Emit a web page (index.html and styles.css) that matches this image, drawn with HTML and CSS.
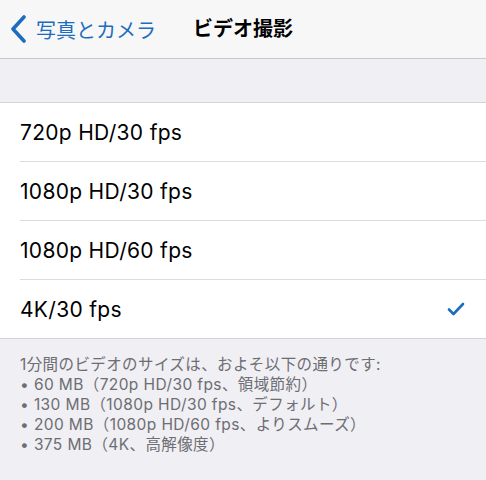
FILE: index.html
```html
<!DOCTYPE html>
<html lang="ja">
<head>
    <meta charset="UTF-8">
    <title>ビデオ撮影</title>
    <link rel="stylesheet" href="styles.css">
</head>
<body>
<div class="navbar">
    <a class="back">
        <svg class="chevron" width="17" height="28" viewBox="0 0 17 28">
            <path d="M14 2 L3 14 L14 26" fill="none" stroke="#1d6cbe" stroke-width="3.6" stroke-linecap="round" stroke-linejoin="round"/>
        </svg>
        <span>写真とカメラ</span>
    </a>
    <div class="title">ビデオ撮影</div>
</div>
<div class="spacer"></div>
<ul class="group">
    <li class="row"><span>720p HD/30 fps</span></li>
    <li class="row"><span>1080p HD/30 fps</span></li>
    <li class="row"><span>1080p HD/60 fps</span></li>
    <li class="row selected">
        <span>4K/30 fps</span>
        <svg class="check" width="18" height="14" viewBox="0 0 18 14">
            <path d="M2 7.5 L6.5 12 L16 2" fill="none" stroke="#1d6cbe" stroke-width="2.6" stroke-linecap="round" stroke-linejoin="round"/>
        </svg>
    </li>
</ul>
<div class="footer">
    <p>1分間のビデオのサイズは、およそ以下の通りです:</p>
    <p>• 60 MB（720p HD/30 fps、領域節約）</p>
    <p>• 130 MB（1080p HD/30 fps、デフォルト）</p>
    <p>• 200 MB（1080p HD/60 fps、よりスムーズ）</p>
    <p>• 375 MB（4K、高解像度）</p>
</div>
</body>
</html>
```

FILE: styles.css
```css
*{margin: 0;padding: 0;}
body {
    background: #efeff4;
    font-family: Inter, "Noto Sans CJK JP", sans-serif;
    color: #000;
    width: 486px;
}

/*========navbar========*/
.navbar {
    height: 58px;
    background: #f7f7f8;
    border-bottom: 1px solid #c8c8cc;
    display: flex;
    align-items: center;
    position: relative;
}
.navbar .back {
    display: flex;
    align-items: center;
    color: #1d6cbe;
    font-size: 20px;
    padding-left: 10px;
    gap: 9px;
}
.navbar .title {
    position: absolute;
    left: 193px;
    top: 0;
    line-height: 58px;
    font-size: 20px;
    font-weight: bold;
}

.spacer {
    height: 43px;
}

/*========group========*/
.group {
    list-style: none;
    background: #fff;
    border-top: 1px solid #d4d4d8;
    border-bottom: 1px solid #d4d4d8;
}
.row {
    height: 58px;
    margin-left: 20px;
    padding-right: 20px;
    display: flex;
    align-items: center;
    justify-content: space-between;
    font-size: 21px;
    letter-spacing: 0.3px;
    border-bottom: 1px solid #dcdce0;
}
.row:last-child {
    border-bottom: none;
}
.row .check {
    margin-right: 1px;
}

/*========footer========*/
.footer {
    padding: 16px 20px 0;
    color: #6d6d72;
    font-size: 15.5px;
    letter-spacing: 0.4px;
    line-height: 20px;
}
```
